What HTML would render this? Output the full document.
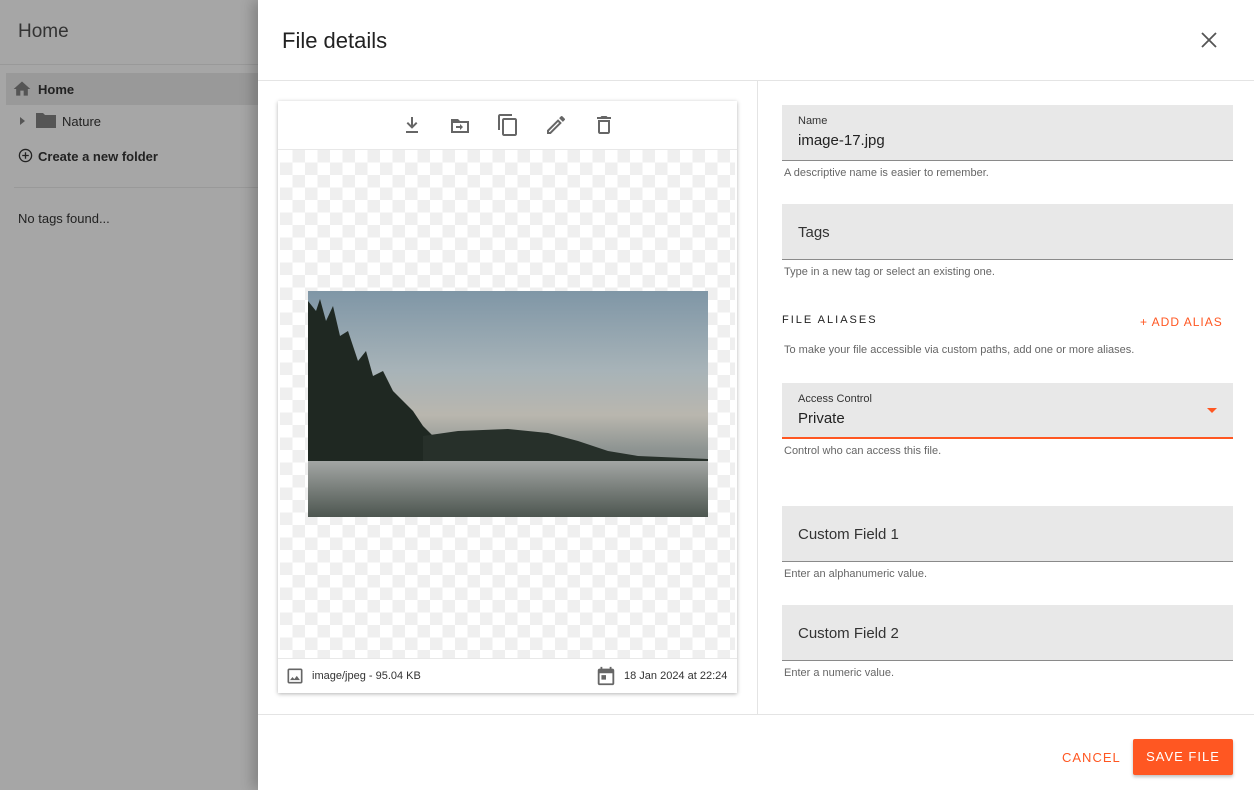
<!DOCTYPE html>
<html><head><meta charset="utf-8"><style>
*{box-sizing:border-box;margin:0;padding:0}
body{width:1254px;height:790px;overflow:hidden;font-family:"Liberation Sans",sans-serif;background:#fff;position:relative;color:#212121}
.side{position:absolute;left:0;top:0;width:258px;height:790px;background:#a6a6a6;color:#222}
.panel{position:absolute;left:258px;top:0;width:996px;height:790px;background:#fff;box-shadow:-6px 0 12px rgba(0,0,0,.2)}
.field{position:absolute;left:782px;width:451px;height:56px;background:#e8e8e8;border-bottom:1px solid #8a8a8a}
.lab{position:absolute;left:16px;top:10px;font-size:11px;color:#333}
.val{position:absolute;left:16px;top:27px;font-size:15px;color:#222}
.ph{position:absolute;left:16px;top:20px;font-size:15px;color:#333}
.help{position:absolute;left:784px;font-size:11px;color:#666}
.ic{position:absolute;fill:#666}
</style></head><body>
<div class="side">
 <div style="position:absolute;left:18px;top:21px;font-size:19px;color:#333">Home</div>
 <div style="position:absolute;left:0;top:64px;width:258px;height:1px;background:#999"></div>
 <div style="position:absolute;left:6px;top:73px;width:252px;height:32px;background:#999"></div>
 <svg class="ic" style="left:12px;top:79px;fill:#555" width="20" height="20" viewBox="0 0 24 24"><path d="M10 20v-6h4v6h5v-8h3L12 3 2 12h3v8z"/></svg>
 <div style="position:absolute;left:38px;top:82px;font-size:13px;font-weight:bold">Home</div>
 <svg style="position:absolute;left:18px;top:116px;fill:#555" width="8" height="10" viewBox="0 0 8 10"><path d="M2 1l5 4-5 4z"/></svg>
 <svg style="position:absolute;left:35px;top:110px;fill:#555" width="22" height="20" viewBox="0 0 22 20"><path d="M1 3h7l2 2h11v13H1z"/></svg>
 <div style="position:absolute;left:62px;top:114px;font-size:13px">Nature</div>
 <svg style="position:absolute;left:18px;top:148px" width="15" height="15" viewBox="0 0 16 16"><circle cx="8" cy="8" r="6.5" fill="none" stroke="#222" stroke-width="1.4"/><path d="M8 4.5v7M4.5 8h7" stroke="#222" stroke-width="1.4"/></svg>
 <div style="position:absolute;left:38px;top:149px;font-size:13px;font-weight:bold">Create a new folder</div>
 <div style="position:absolute;left:14px;top:187px;width:244px;height:1px;background:#999"></div>
 <div style="position:absolute;left:18px;top:211px;font-size:13px">No tags found...</div>
</div>
<div class="panel">
 <div style="position:absolute;left:24px;top:28px;font-size:22px;color:#222">File details</div>
 <svg style="position:absolute;left:942px;top:31px" width="18" height="18" viewBox="0 0 18 18"><path d="M2 2l14 14M16 2L2 16" stroke="#555" stroke-width="1.8"/></svg>
 <div style="position:absolute;left:0;top:80px;width:996px;height:1px;background:#e4e4e4"></div>
 <div style="position:absolute;left:499px;top:81px;width:1px;height:633px;background:#e4e4e4"></div>
 <div style="position:absolute;left:0;top:714px;width:996px;height:1px;background:#e4e4e4"></div>
 <div style="position:absolute;left:804px;top:750px;font-size:13px;letter-spacing:1px;color:#ff5722">CANCEL</div>
 <div style="position:absolute;left:875px;top:739px;width:100px;height:36px;background:#ff5722;color:#fff;font-size:13px;letter-spacing:1px;text-align:center;line-height:36px;border-radius:2px;box-shadow:0 2px 3px rgba(0,0,0,.25)">SAVE FILE</div>
</div>
<div style="position:absolute;left:278px;top:101px;width:459px;height:592px;background:#fff;box-shadow:0 1px 4px rgba(0,0,0,.3)">
 <div style="position:absolute;left:2px;top:49px;width:455px;height:508px;background-color:#fff;background-image:linear-gradient(45deg,#efefef 25%,transparent 25%,transparent 75%,#efefef 75%),linear-gradient(45deg,#efefef 25%,transparent 25%,transparent 75%,#efefef 75%);background-size:25px 25px;background-position:0 0,12.5px 12.5px"></div>
 <div style="position:absolute;left:0;top:48px;width:459px;height:1px;background:#e8e8e8"></div>
 <div style="position:absolute;left:0;top:557px;width:459px;height:1px;background:#e8e8e8"></div>
 <svg class="ic" style="left:122px;top:12px" width="24" height="24" viewBox="0 0 24 24"><path d="M11 4h2v8l3-3 1.4 1.4L12 15.8 6.6 10.4 8 9l3 3zM6 18h12v2H6z"/></svg>
 <svg class="ic" style="left:170px;top:12px" width="24" height="24" viewBox="0 0 24 24"><path d="M3 6h7l2 2h9v12H3zM5 10v8h14v-8zM12 11l3 3-3 3v-2H8v-2h4z"/></svg>
 <svg class="ic" style="left:218px;top:12px" width="24" height="24" viewBox="0 0 24 24"><path d="M16 1H4c-1.1 0-2 .9-2 2v14h2V3h12V1zm3 4H8c-1.1 0-2 .9-2 2v14c0 1.1.9 2 2 2h11c1.1 0 2-.9 2-2V7c0-1.1-.9-2-2-2zm0 16H8V7h11v14z"/></svg>
 <svg class="ic" style="left:266px;top:12px" width="24" height="24" viewBox="0 0 24 24"><path d="M3 17.25V21h3.75L17.8 9.94l-3.75-3.75L3 17.25zM5.92 19H5v-.92l9.06-9.06.92.92L5.92 19zM20.7 7.04a1 1 0 000-1.41l-2.34-2.34a1 1 0 00-1.41 0l-1.83 1.83 3.75 3.75 1.83-1.830z"/></svg>
 <svg class="ic" style="left:314px;top:12px" width="24" height="24" viewBox="0 0 24 24"><path d="M6 19c0 1.1.9 2 2 2h8c1.1 0 2-.9 2-2V7H6v12zM8 9h8v10H8V9zm7.5-5l-1-1h-5l-1 1H5v2h14V4z"/></svg>
 <div style="position:absolute;left:30px;top:190px;width:400px;height:226px;background:linear-gradient(180deg,#7f96a6 0%,#a7b3b8 35%,#b9b6ae 55%,#8e9492 70%,#6e7573 100%);overflow:hidden">
  <svg style="position:absolute;left:0;top:0" width="400" height="226" viewBox="0 0 400 226"><path d="M0 10L8 20 12 8 18 30 25 15 32 45 40 40 50 70 58 60 65 85 75 80 85 100 95 110 105 120 115 135 130 150 130 175 0 175z" fill="#1f2822"/><path d="M115 145L150 140 200 138 240 142 270 150 300 160 330 165 400 168 400 180 115 180z" fill="#27302a"/></svg>
  <div style="position:absolute;left:0;top:170px;width:400px;height:56px;background:linear-gradient(180deg,#a3a6a4,#4d5650)"></div>
 </div>
 <svg class="ic" style="left:7px;top:565px" width="20" height="20" viewBox="0 0 24 24"><path d="M19 5v14H5V5h14m0-2H5c-1.1 0-2 .9-2 2v14c0 1.1.9 2 2 2h14c1.1 0 2-.9 2-2V5c0-1.1-.9-2-2-2zm-4.86 8.86l-3 3.870L9 13.14 6 17h12l-3.86-5.14z"/></svg>
 <div style="position:absolute;left:34px;top:569px;font-size:11px;color:#333">image/jpeg - 95.04 KB</div>
 <svg class="ic" style="left:317px;top:564px" width="22" height="22" viewBox="0 0 24 24"><path d="M19 4h-1V2h-2v2H8V2H6v2H5c-1.1 0-2 .9-2 2v14c0 1.1.9 2 2 2h14c1.1 0 2-.9 2-2V6c0-1.1-.9-2-2-2zm0 16H5V9h14v11zM7 11h5v5H7z"/></svg>
 <div style="position:absolute;left:346px;top:569px;font-size:11px;color:#333">18 Jan 2024 at 22:24</div>
</div>
<div class="field" style="top:105px"><div class="lab">Name</div><div class="val">image-17.jpg</div></div>
<div class="help" style="top:167px">A descriptive name is easier to remember.</div>
<div class="field" style="top:204px"><div class="ph">Tags</div></div>
<div class="help" style="top:266px">Type in a new tag or select an existing one.</div>
<div style="position:absolute;left:782px;top:314px;font-size:11px;letter-spacing:2px;color:#222">FILE ALIASES</div>
<div style="position:absolute;left:1140px;top:315px;font-size:12px;letter-spacing:1px;color:#ff5722">+ ADD ALIAS</div>
<div class="help" style="top:344px">To make your file accessible via custom paths, add one or more aliases.</div>
<div class="field" style="top:383px;border-bottom:2px solid #ff5722"><div class="lab">Access Control</div><div class="val">Private</div>
 <svg style="position:absolute;left:425px;top:25px" width="10" height="5" viewBox="0 0 10 5"><path d="M0 0h10L5 5z" fill="#ff5722"/></svg></div>
<div class="help" style="top:445px">Control who can access this file.</div>
<div class="field" style="top:506px"><div class="ph">Custom Field 1</div></div>
<div class="help" style="top:568px">Enter an alphanumeric value.</div>
<div class="field" style="top:605px"><div class="ph">Custom Field 2</div></div>
<div class="help" style="top:667px">Enter a numeric value.</div>
</body></html>
